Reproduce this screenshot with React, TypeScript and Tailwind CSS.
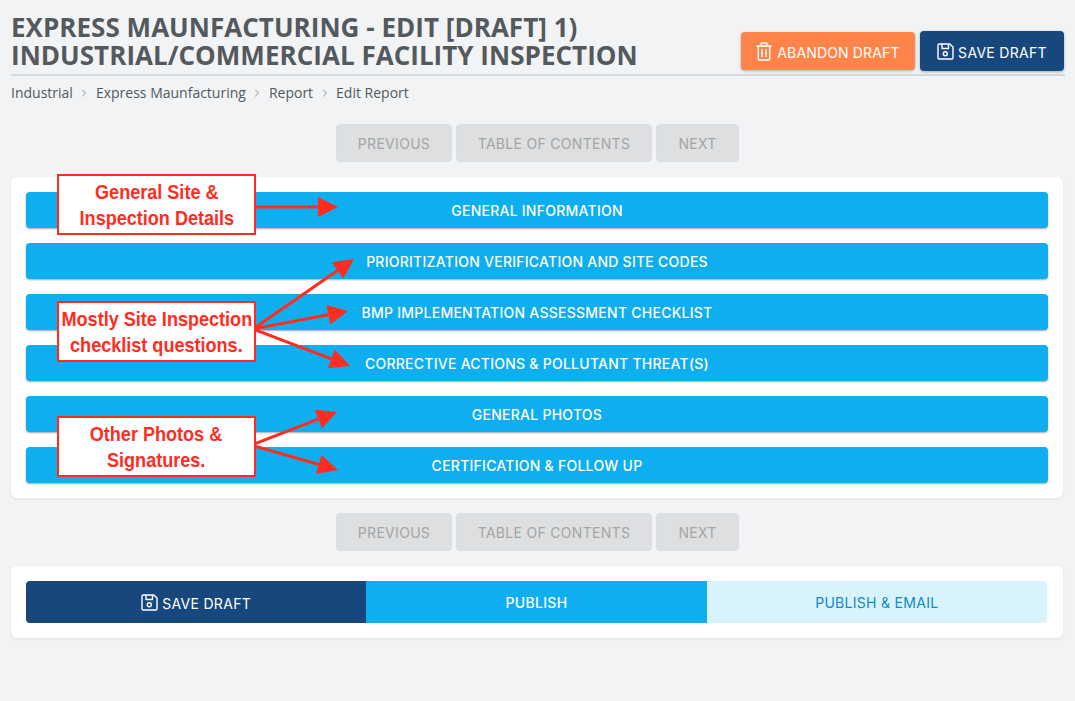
import { ChevronRight } from 'lucide-react'

const SECTIONS = [
  'GENERAL INFORMATION',
  'PRIORITIZATION VERIFICATION AND SITE CODES',
  'BMP IMPLEMENTATION ASSESSMENT CHECKLIST',
  'CORRECTIVE ACTIONS & POLLUTANT THREAT(S)',
  'GENERAL PHOTOS',
  'CERTIFICATION & FOLLOW UP',
]

const CRUMBS = ['Industrial', 'Express Maunfacturing', 'Report', 'Edit Report']

const NOTES = [
  { top: 'top-[174px]', lines: ['General Site &', 'Inspection Details'] },
  { top: 'top-[301px]', lines: ['Mostly Site Inspection', 'checklist questions.'] },
  { top: 'top-[416px]', lines: ['Other Photos &', 'Signatures.'] },
]

// start and end of each red arrow, page coordinates
const ARROWS = [
  [255, 207, 338, 207],
  [253, 329, 354, 259],
  [253, 329, 348, 311],
  [253, 329, 350, 366],
  [254, 444, 337, 412],
  [254, 446, 338, 470],
]

function SaveIcon() {
  return (
    <svg width="17" height="17" viewBox="0 0 17 17" fill="none" stroke="currentColor" strokeWidth="1.4" strokeLinejoin="round">
      <path d="M2.2 1h10.6l3.2 3v10.8a1.2 1.2 0 0 1-1.2 1.2H2.2A1.2 1.2 0 0 1 1 14.8V2.2A1.2 1.2 0 0 1 2.2 1z" />
      <path d="M5 1v4.5h6.5V1" />
      <circle cx="8.3" cy="10.8" r="2" />
    </svg>
  )
}

function TrashIcon() {
  return (
    <svg width="16" height="19" viewBox="0 0 16 19" fill="none" stroke="currentColor" strokeWidth="1.4" strokeLinecap="round" strokeLinejoin="round">
      <path d="M1 4h14M5 4V2a1 1 0 0 1 1-1h4a1 1 0 0 1 1 1v2" />
      <path d="M2.3 4v12.5A1.5 1.5 0 0 0 3.8 18h8.400a1.500 1.500 0 0 0 1.500-1.500V4" />
      <path d="M6 7.500v7M10 7.500v7" />
    </svg>
  )
}

function PagerNav() {
  return (
    <div className="flex justify-center gap-1 font-['Inter',sans-serif] text-[14px] tracking-[0.3px] text-[#a3a5a6]">
      <div className="w-[116px] h-[38px] flex items-center justify-center rounded bg-[#dedfe0] border border-[#dbdfe3]">PREVIOUS</div>
      <div className="w-[196px] h-[38px] flex items-center justify-center rounded bg-[#dedfe0] border border-[#dbdfe3]">TABLE OF CONTENTS</div>
      <div className="w-[83px] h-[38px] flex items-center justify-center rounded bg-[#dedfe0] border border-[#dbdfe3]">NEXT</div>
    </div>
  )
}

export default function App() {
  return (
    <div className="relative w-[1075px] h-[701px] overflow-hidden bg-[#f1f3f5] px-[11px] pt-[13px] font-['Inter',sans-serif]">
      {/* Header */}
      <div className="flex items-end justify-between w-[1053px]">
        <h1 className="font-['Open_Sans',sans-serif] font-bold text-[26px] leading-[28px] tracking-[0.03px] text-[#53595d] w-[700px]">
          EXPRESS MAUNFACTURING - EDIT [DRAFT] 1) INDUSTRIAL/COMMERCIAL FACILITY INSPECTION
        </h1>
        <div className="flex items-center gap-[5px] text-white text-[14px] mb-[-2px]">
          <div className="w-[174px] h-[38px] flex items-center justify-center gap-[5px] rounded bg-[#ff844a] tracking-[0.15px] shadow-[0_1px_3px_rgba(0,0,0,0.3)]">
            <TrashIcon />
            <span className="translate-y-[1px]">ABANDON DRAFT</span>
          </div>
          <div className="w-[144px] h-[40px] flex items-center justify-center gap-[4px] rounded bg-[#17477c] tracking-[0.3px] shadow-[0_1px_3px_rgba(0,0,0,0.3)]">
            <SaveIcon />
            <span className="translate-y-[1px]">SAVE DRAFT</span>
          </div>
        </div>
      </div>
      <div className="h-[2px] w-[1054px] mt-[5px] bg-[#d5dade]" />

      {/* Breadcrumb */}
      <div className="flex items-center mt-[6px] h-[20px] font-['Open_Sans',sans-serif] text-[14px] text-[#53595d]">
        {CRUMBS.map((crumb, i) => (
          <div key={crumb} className="flex items-center">
            {i > 0 && <ChevronRight className="w-[12px] h-[12px] mx-[5.5px] translate-y-[1px] text-[#6b7175]" strokeWidth={1.5} />}
            <span>{crumb}</span>
          </div>
        ))}
      </div>

      <div className="mt-[22px] w-[1053px]">
        <PagerNav />
      </div>

      {/* Sections */}
      <div className="mt-[15px] w-[1052px] rounded-md bg-white p-[15px] flex flex-col gap-[15px] shadow-[0_1px_3px_rgba(0,0,0,0.08)]">
        {SECTIONS.map((title) => (
          <div
            key={title}
            className="h-[36px] flex items-center justify-center rounded bg-[#0faeee] text-white text-[14px] font-medium tracking-[0.25px] shadow-[0_1px_2px_rgba(0,0,0,0.35)]"
          >
            {title}
          </div>
        ))}
      </div>

      <div className="mt-[15px] w-[1053px]">
        <PagerNav />
      </div>

      {/* Publish bar */}
      <div className="mt-[15px] w-[1052px] rounded-md bg-white pl-[15px] pr-[16px] py-[15px] shadow-[0_1px_3px_rgba(0,0,0,0.08)]">
        <div className="grid grid-cols-3 h-[42px] rounded overflow-hidden text-[14px] tracking-[0.3px]">
          <div className="flex items-center justify-center gap-[4px] bg-[#17477c] text-white">
            <SaveIcon />
            <span className="translate-y-[1px]">SAVE DRAFT</span>
          </div>
          <div className="flex items-center justify-center bg-[#0faeee] text-white font-medium">PUBLISH</div>
          <div className="flex items-center justify-center bg-[#d9f3fd] text-[#0b8cc4]">PUBLISH &amp; EMAIL</div>
        </div>
      </div>

      {/* Annotation overlay */}
      <svg className="absolute left-0 top-0 pointer-events-none" width="1075" height="701" fill="none">
        {ARROWS.map(([x1, y1, x2, y2]) => {
          const angle = Math.atan2(y2 - y1, x2 - x1)
          const len = 20
          const half = 10
          const bx = x2 - len * Math.cos(angle)
          const by = y2 - len * Math.sin(angle)
          const nx = -Math.sin(angle) * half
          const ny = Math.cos(angle) * half
          return (
            <g key={`${x1}-${y1}-${x2}-${y2}`}>
              <line x1={x1} y1={y1} x2={bx} y2={by} stroke="#ff2d1f" strokeWidth="3" />
              <polygon points={`${x2},${y2} ${bx + nx},${by + ny} ${bx - nx},${by - ny}`} fill="#ff2d1f" />
            </g>
          )
        })}
      </svg>
      {NOTES.map((note) => (
        <div
          key={note.top}
          className={`absolute left-[57px] w-[199px] h-[61px] ${note.top} flex flex-col items-center justify-center bg-white border-2 border-[#ff2d1f] font-['Liberation_Sans',sans-serif] font-bold text-[21px] leading-[26px] text-[#ff2d1f] whitespace-nowrap`}
        >
          {note.lines.map((line) => (
            <span key={line} className="scale-x-[0.86]">{line}</span>
          ))}
        </div>
      ))}
    </div>
  )
}
